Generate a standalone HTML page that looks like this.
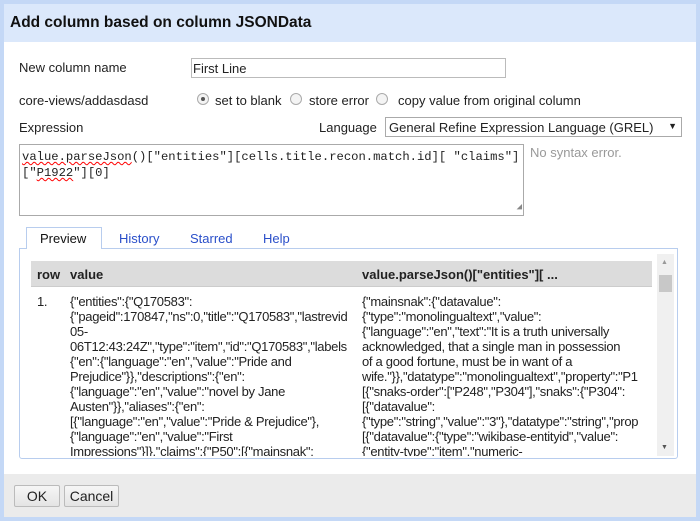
<!DOCTYPE html>
<html><head><style>
*{margin:0;padding:0;box-sizing:border-box}
body{width:700px;height:521px;background:#c4d8f6;font-family:"Liberation Sans",Arial,sans-serif;font-size:13px;color:#222;position:relative;overflow:hidden}
.dlg{position:absolute;left:4px;top:4px;width:692px;height:513px;background:#fff}
.title{position:absolute;left:0;top:0;width:692px;height:38px;background:#dbe8fb;font-weight:bold;font-size:15.5px;padding:10px 0 0 6px;color:#111}
.a{position:absolute;white-space:nowrap}
.inp{position:absolute;border:1px solid #bbb;background:#fff}
.radio{position:absolute;width:12px;height:12px;border:1px solid #aaa;border-radius:50%;background:#f4f4f4}
.radio.on::after{content:"";position:absolute;left:3px;top:3px;width:4px;height:4px;border-radius:50%;background:#555}
.mono{font-family:"Liberation Mono",monospace;font-size:12.2px;line-height:16px;white-space:nowrap}
.tab{position:absolute;top:227px;font-size:13px;color:#2a4fc9}
.panel{position:absolute;left:15px;top:244px;width:659px;height:211px;border:1px solid #b8cdee;border-radius:0 0 3px 3px}
.hd{position:absolute;left:27px;top:257px;width:621px;height:26px;background:#dcdcdc;border-bottom:1px solid #ccc;font-weight:bold;font-size:13px}
.col{position:absolute;font-size:13px;line-height:15px;letter-spacing:-0.3px;overflow:hidden;white-space:nowrap}
.foot{position:absolute;left:0;top:470px;width:692px;height:43px;background:#ebebeb}
.btn{position:absolute;top:481px;height:22px;border:1px solid #bbb;border-radius:2px;background:linear-gradient(#f6f6f6,#e4e4e4);font-size:14px;text-align:center;line-height:20px}
u{text-decoration:underline wavy red;text-decoration-thickness:1px}
</style></head><body>
<div class="dlg">
<div class="title">Add column based on column JSONData</div>
<div class="a" style="left:15px;top:56px">New column name</div>
<div class="inp" style="left:187px;top:54px;width:315px;height:20px;padding:2px 1px;font-size:13px">First Line</div>
<div class="a" style="left:15px;top:89px">core-views/addasdasd</div>
<div class="radio on" style="left:193px;top:89px"></div>
<div class="a" style="left:211px;top:89px">set to blank</div>
<div class="radio" style="left:286px;top:89px"></div>
<div class="a" style="left:305px;top:89px">store error</div>
<div class="radio" style="left:372px;top:89px"></div>
<div class="a" style="left:394px;top:89px">copy value from original column</div>
<div class="a" style="left:15px;top:116px">Expression</div>
<div class="a" style="left:315px;top:116px">Language</div>
<div class="inp" style="left:381px;top:113px;width:297px;height:20px;padding:2px 3px;font-size:13px;border-color:#aaa">General Refine Expression Language (GREL) <span style="position:absolute;right:4px;top:3px;font-size:9px">▼</span></div>
<div class="inp mono" style="left:15px;top:140px;width:505px;height:72px;padding:4px 2px;border-color:#aaa"><u>value.parseJson</u>()["entities"][cells.title.recon.match.id][ "claims"]<br>["<u>P1922</u>"][0]<span style="position:absolute;right:1px;bottom:0;font-size:9px;color:#888">◢</span></div>
<div class="a" style="left:526px;top:141px;color:#999">No syntax error.</div>
<div class="panel"></div>
<div style="position:absolute;left:22px;top:223px;width:76px;height:22px;border:1px solid #b8cdee;border-bottom:none;background:#fff"></div>
<div class="tab" style="left:36px;color:#111">Preview</div>
<div class="tab" style="left:115px">History</div>
<div class="tab" style="left:186px">Starred</div>
<div class="tab" style="left:259px">Help</div>
<div class="hd"><span class="a" style="left:6px;top:6px">row</span><span class="a" style="left:39px;top:6px">value</span><span class="a" style="left:331px;top:6px">value.parseJson()["entities"][ ...</span></div>
<div class="col" style="left:33px;top:290px">1.</div>
<div class="col" style="left:66px;top:290px;width:287px;height:162px">{"entities":{"Q170583":<br>{"pageid":170847,"ns":0,"title":"Q170583","lastrevid<br>05-<br>06T12:43:24Z","type":"item","id":"Q170583","labels<br>{"en":{"language":"en","value":"Pride and<br>Prejudice"}},"descriptions":{"en":<br>{"language":"en","value":"novel by Jane<br>Austen"}},"aliases":{"en":<br>[{"language":"en","value":"Pride &amp; Prejudice"},<br>{"language":"en","value":"First<br>Impressions"}]},"claims":{"P50":[{"mainsnak":</div>
<div class="col" style="left:358px;top:290px;width:290px;height:162px">{"mainsnak":{"datavalue":<br>{"type":"monolingualtext","value":<br>{"language":"en","text":"It is a truth universally<br>acknowledged, that a single man in possession<br>of a good fortune, must be in want of a<br>wife."}},"datatype":"monolingualtext","property":"P1<br>[{"snaks-order":["P248","P304"],"snaks":{"P304":<br>[{"datavalue":<br>{"type":"string","value":"3"},"datatype":"string","prop<br>[{"datavalue":{"type":"wikibase-entityid","value":<br>{"entity-type":"item","numeric-</div>
<div style="position:absolute;left:653px;top:250px;width:17px;height:202px;background:#f0f0f0"></div>
<div style="position:absolute;left:655px;top:271px;width:13px;height:17px;background:#c8c8c8"></div>
<div class="a" style="left:657px;top:255px;font-size:7px;color:#999">▲</div>
<div class="a" style="left:657px;top:440px;font-size:7px;color:#555">▼</div>
<div class="foot"></div>
<div class="btn" style="left:10px;width:46px">OK</div>
<div class="btn" style="left:60px;width:55px">Cancel</div>
</div>
</body></html>
